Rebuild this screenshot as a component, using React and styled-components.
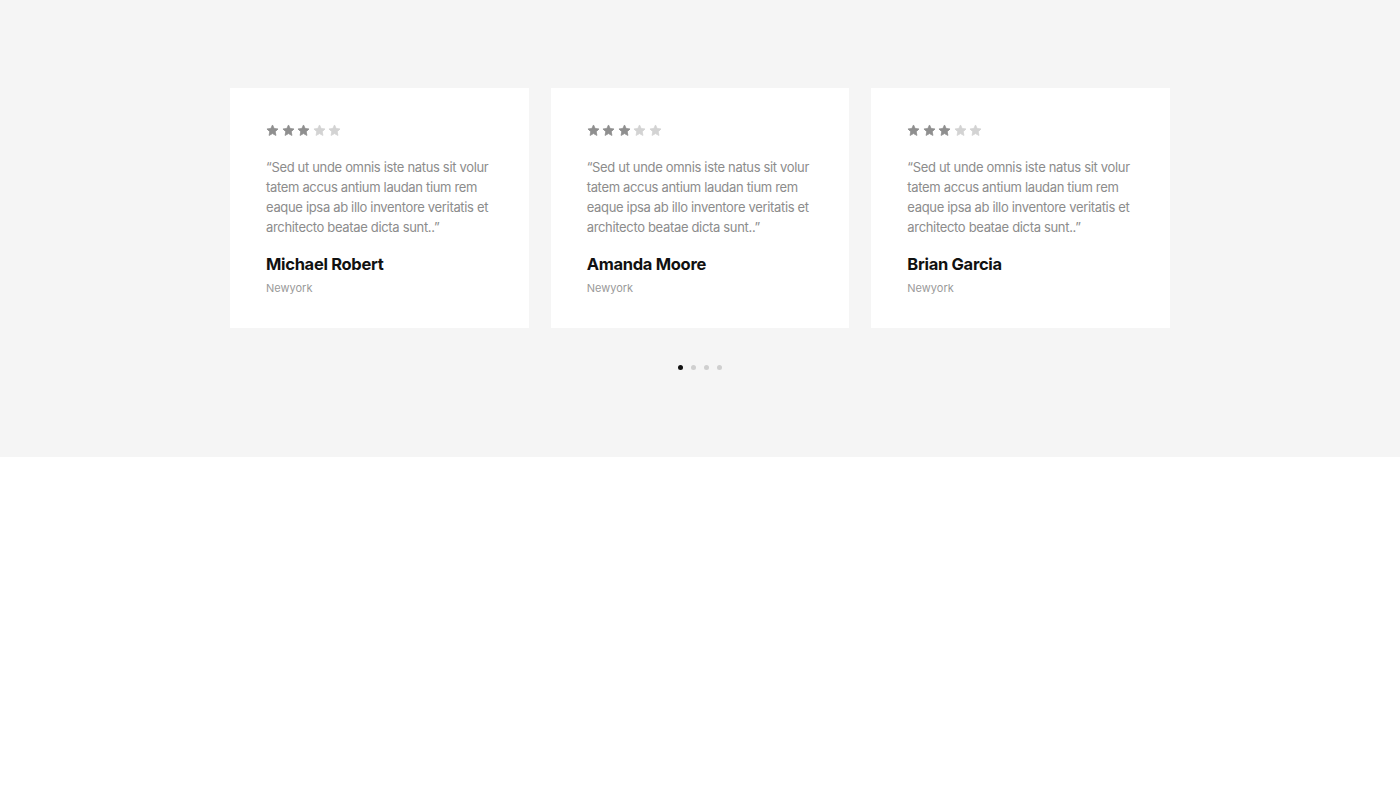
import styled, { createGlobalStyle } from "styled-components";

const GlobalStyle = createGlobalStyle`
  body {
    margin: 0;
    background: #ffffff;
    font-family: Inter, "Noto Sans", sans-serif;
  }
`;

const Section = styled.section`
  background: #f5f5f5;
  height: 457px;
  padding-top: 88px;
  box-sizing: border-box;
`;

const Row = styled.div`
  width: 940px;
  margin: 0 auto;
  display: grid;
  grid-template-columns: repeat(3, 1fr);
  gap: 22px;
`;

const Card = styled.article`
  background: #ffffff;
  height: 240px;
  box-sizing: border-box;
  padding: 36px 36px 0 36px;
`;

const Stars = styled.div`
  display: flex;
  gap: 2.5px;
  height: 14px;
`;

const Quote = styled.p`
  margin: 19px 0 0;
  font-size: 13px;
  line-height: 20px;
  color: #8c8c8c;
  letter-spacing: -0.33px;
  white-space: nowrap;
`;

const Name = styled.h3`
  margin: 15px 0 0;
  font-size: 16.5px;
  line-height: 24px;
  font-weight: 700;
  color: #111111;
  letter-spacing: -0.3px;
`;

const City = styled.div`
  margin-top: 5px;
  font-size: 11px;
  line-height: 14px;
  color: #9a9a9a;
`;

const Dots = styled.div`
  display: flex;
  justify-content: center;
  gap: 8px;
  margin-top: 37px;
`;

const Dot = styled.span`
  width: 5px;
  height: 5px;
  border-radius: 50%;
  background: ${(p) => (p.$active ? "#111111" : "#cfcfcf")};
`;

function Star({ filled }) {
  return (
    <svg width="13" height="13" viewBox="0 0 24 24">
      <path
        d="M12 1.8l3.1 6.5 7.1.9-5.2 4.9 1.3 7-6.3-3.4-6.3 3.4 1.3-7-5.2-4.9 7.1-.9z"
        fill={filled ? "#8f8f8f" : "#d3d3d3"}
        stroke={filled ? "#8f8f8f" : "#d3d3d3"}
        strokeWidth="1.5"
        strokeLinejoin="round"
      />
    </svg>
  );
}

const reviews = [
  { name: "Michael Robert", city: "Newyork" },
  { name: "Amanda Moore", city: "Newyork" },
  { name: "Brian Garcia", city: "Newyork" },
];

export default function App() {
  return (
    <>
      <GlobalStyle />
      <Section>
        <Row>
          {reviews.map((r) => (
            <Card key={r.name}>
              <Stars>
                {[0, 1, 2, 3, 4].map((i) => (
                  <Star key={i} filled={i < 3} />
                ))}
              </Stars>
              <Quote>
                “Sed ut unde omnis iste natus sit volur
                <br />
                tatem accus antium laudan tium rem
                <br />
                eaque ipsa ab illo inventore veritatis et
                <br />
                architecto beatae dicta sunt..”
              </Quote>
              <Name>{r.name}</Name>
              <City>{r.city}</City>
            </Card>
          ))}
        </Row>
        <Dots>
          <Dot $active />
          <Dot />
          <Dot />
          <Dot />
        </Dots>
      </Section>
    </>
  );
}
